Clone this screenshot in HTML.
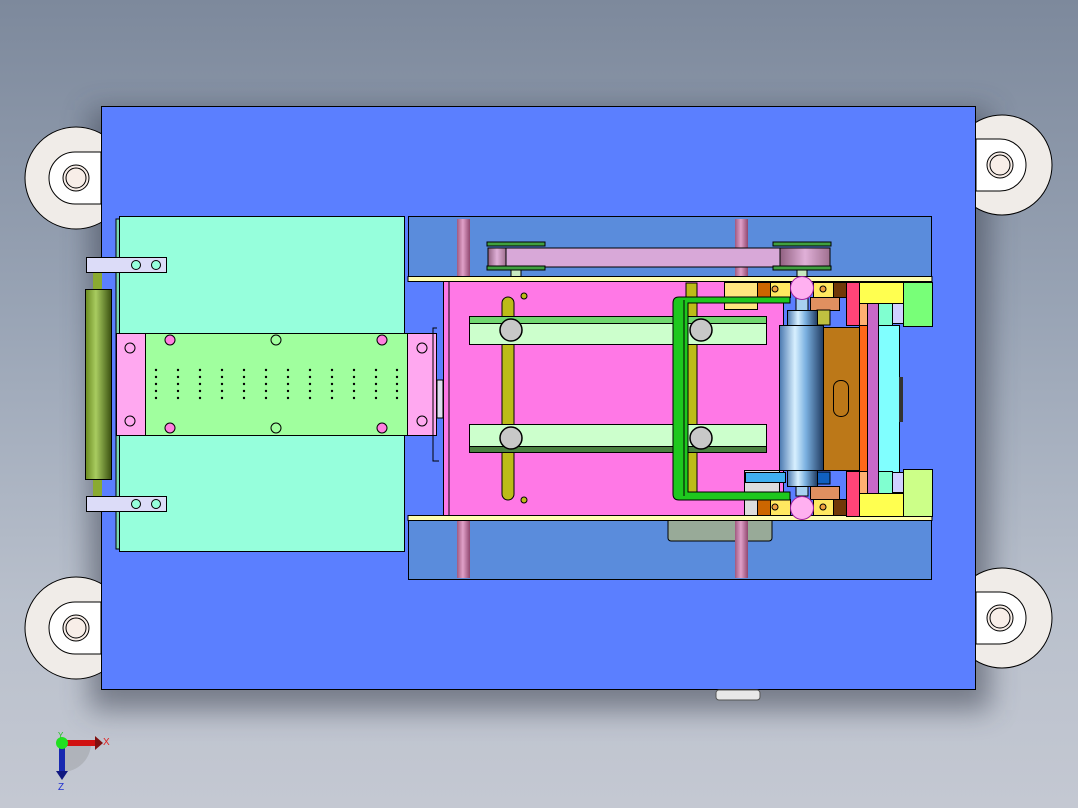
<!DOCTYPE html><html><head><meta charset="utf-8"><style>
html,body{margin:0;padding:0}
body{width:1078px;height:808px;overflow:hidden;background:linear-gradient(180deg,#7d899c 0%,#9aa5b6 40%,#b9c0cc 75%,#c4c8d2 100%);position:relative;font-family:"Liberation Sans",sans-serif}
svg{position:absolute;left:0;top:0}
</style></head><body>
<svg width="1078" height="808" viewBox="0 0 1078 808">
<defs>
<filter id="sh" x="-10%" y="-10%" width="120%" height="130%"><feGaussianBlur stdDeviation="14"/></filter>
<linearGradient id="cyl" x1="0" x2="1"><stop offset="0" stop-color="#4a78b0"/><stop offset=".35" stop-color="#d8f0ff"/><stop offset=".6" stop-color="#7ab0e0"/><stop offset="1" stop-color="#203a60"/></linearGradient>
<linearGradient id="rol" x1="0" x2="1"><stop offset="0" stop-color="#6a8a20"/><stop offset=".4" stop-color="#a8cc60"/><stop offset="1" stop-color="#3a5010"/></linearGradient>
<linearGradient id="rod" x1="0" x2="1"><stop offset="0" stop-color="#a05a80"/><stop offset=".45" stop-color="#e0a0c8"/><stop offset="1" stop-color="#904870"/></linearGradient>
<linearGradient id="pul" x1="0" x2="1"><stop offset="0" stop-color="#906080"/><stop offset=".5" stop-color="#e0b0d8"/><stop offset="1" stop-color="#a07090"/></linearGradient>
</defs>
<rect x="90" y="110" width="900" height="600" fill="#3a4050" opacity=".55" filter="url(#sh)"/>
<g stroke="#000" stroke-width="1">
<circle cx="76" cy="178" r="51" fill="#f0ece8"/>
<circle cx="76" cy="628" r="51" fill="#f0ece8"/>
<circle cx="1002" cy="165" r="50" fill="#f0ece8"/>
<circle cx="1002" cy="618" r="50" fill="#f0ece8"/>
<path d="M101 152 H75 A26 26 0 0 0 75 204 H101 Z" fill="#fff"/>
<path d="M101 602 H75 A26 26 0 0 0 75 654 H101 Z" fill="#fff"/>
<path d="M976 139 H1000 A26 26 0 0 1 1000 191 H976 Z" fill="#fff"/>
<path d="M976 592 H1000 A26 26 0 0 1 1000 644 H976 Z" fill="#fff"/>
<circle cx="76" cy="178" r="13" fill="#f8eee8"/><circle cx="76" cy="178" r="10" fill="#f8eee8"/>
<circle cx="76" cy="628" r="13" fill="#f8eee8"/><circle cx="76" cy="628" r="10" fill="#f8eee8"/>
<circle cx="1000" cy="165" r="13" fill="#f8eee8"/><circle cx="1000" cy="165" r="10" fill="#f8eee8"/>
<circle cx="1000" cy="618" r="13" fill="#f8eee8"/><circle cx="1000" cy="618" r="10" fill="#f8eee8"/>
</g>
<rect x="101.5" y="106.5" width="874" height="583" fill="#5b7fff" stroke="#000"/>
<rect x="716" y="690" width="44" height="10" rx="3" fill="#e8e8e8" stroke="#555"/>
<g stroke="#000" stroke-width="1">
<rect x="116" y="219" width="4" height="330" fill="#7ad8b0"/>
<rect x="119.5" y="216.5" width="285" height="335" fill="#96ffdc"/>
<rect x="145.5" y="333.5" width="262" height="102" fill="#a0ff9e"/>
<rect x="116.5" y="333.5" width="29" height="102" fill="#ffa8f0"/>
<rect x="407.5" y="333.5" width="29" height="102" fill="#ffa8f0"/>
<rect x="437" y="380" width="6" height="38" fill="#dde"/>
<path d="M437 328 h-4 v133 h6" fill="none"/>
<rect x="93" y="272" width="9" height="225" fill="#8aaa30" stroke="none"/>
<rect x="85.5" y="289.5" width="26" height="190" fill="url(#rol)"/>
<rect x="86.5" y="257.5" width="80" height="15" fill="#dcdcf8"/>
<rect x="86.5" y="496.5" width="80" height="15" fill="#dcdcf8"/>
<circle cx="136" cy="265" r="4.5" fill="#96ffdc"/><circle cx="156" cy="265" r="4.5" fill="#96ffdc"/>
<circle cx="136" cy="504" r="4.5" fill="#96ffdc"/><circle cx="156" cy="504" r="4.5" fill="#96ffdc"/>
<circle cx="130" cy="348" r="5" fill="#ffa8f0"/><circle cx="130" cy="421" r="5" fill="#ffa8f0"/>
<circle cx="422" cy="348" r="5" fill="#ffa8f0"/><circle cx="422" cy="421" r="5" fill="#ffa8f0"/>
<circle cx="170" cy="340" r="5" fill="#ff80e0"/><circle cx="276" cy="340" r="5" fill="#a0ff9e"/><circle cx="382" cy="340" r="5" fill="#ff80e0"/>
<circle cx="170" cy="428" r="5" fill="#ff80e0"/><circle cx="276" cy="428" r="5" fill="#a0ff9e"/><circle cx="382" cy="428" r="5" fill="#ff80e0"/>
</g>
<g fill="#000">
<g id="col"><circle cx="156" cy="370" r="1.2"/><circle cx="156" cy="377" r="1.2"/><circle cx="156" cy="384" r="1.2"/><circle cx="156" cy="391" r="1.2"/><circle cx="156" cy="398" r="1.2"/></g>
<use href="#col" x="22"/><use href="#col" x="44"/><use href="#col" x="66"/><use href="#col" x="88"/><use href="#col" x="110"/><use href="#col" x="132"/><use href="#col" x="154"/><use href="#col" x="176"/><use href="#col" x="198"/><use href="#col" x="220"/><use href="#col" x="241"/>
</g>
<g stroke="#000" stroke-width="1">
<rect x="408.5" y="216.5" width="523" height="60" fill="#5a8cdc"/>
<rect x="408.5" y="519.5" width="523" height="60" fill="#5a8cdc"/>
<rect x="668" y="517" width="104" height="24" rx="3" fill="#98aa98"/>
<rect x="457" y="219" width="13" height="57" fill="url(#rod)" stroke="none"/>
<rect x="735" y="219" width="13" height="57" fill="url(#rod)" stroke="none"/>
<rect x="457" y="521" width="13" height="57" fill="url(#rod)" stroke="none"/>
<rect x="735" y="521" width="13" height="57" fill="url(#rod)" stroke="none"/>
<rect x="511" y="267" width="10" height="10" fill="#c8e8c0"/><rect x="797" y="267" width="10" height="10" fill="#c8e8c0"/>
<rect x="488" y="248" width="342" height="19" fill="#d8a8d8"/>
<rect x="488" y="248" width="18" height="19" fill="url(#pul)"/><rect x="780" y="248" width="50" height="19" fill="url(#pul)"/>
<rect x="487" y="242" width="58" height="4" fill="#40a040"/><rect x="487" y="266" width="58" height="4" fill="#40a040"/>
<rect x="773" y="242" width="58" height="4" fill="#40a040"/><rect x="773" y="266" width="58" height="4" fill="#40a040"/>
<rect x="408" y="276.5" width="524" height="5" fill="#ffffb0"/>
<rect x="408" y="515.5" width="524" height="5" fill="#ffffb0"/>
<rect x="443.5" y="281.5" width="340" height="234" fill="#ff78e6"/>
<line x1="449" y1="282" x2="449" y2="515"/>
<rect x="502" y="297" width="12" height="203" rx="6" fill="#bcbc18"/>
<rect x="686" y="283" width="11" height="217" fill="#bcbc18"/>
<circle cx="524" cy="296" r="3" fill="#bcbc18"/><circle cx="524" cy="500" r="3" fill="#bcbc18"/>
<rect x="469.5" y="316.5" width="297" height="28" fill="#ccffcc"/><rect x="469.5" y="316.5" width="297" height="7" fill="#70d870"/>
<rect x="469.5" y="424.5" width="297" height="28" fill="#ccffcc"/><rect x="469.5" y="446.5" width="297" height="6" fill="#4a8040"/>
<circle cx="511" cy="330" r="11" fill="#c8c8c8" stroke-width="1.5"/><circle cx="701" cy="330" r="11" fill="#c8c8c8" stroke-width="1.5"/>
<circle cx="511" cy="438" r="11" fill="#c8c8c8" stroke-width="1.5"/><circle cx="701" cy="438" r="11" fill="#c8c8c8" stroke-width="1.5"/>
<rect x="724.5" y="282.5" width="33" height="27" fill="#ffe680"/>
<rect x="757.5" y="282.5" width="13" height="15" fill="#cc6600"/>
<rect x="770.5" y="282.5" width="20" height="15" fill="#ffe860"/>
<rect x="813.5" y="282.5" width="20" height="15" fill="#ffe860"/>
<rect x="833.5" y="282.5" width="13" height="15" fill="#703808"/>
<rect x="810.5" y="297.5" width="29" height="13" fill="#e09060"/>
<rect x="744.5" y="470.5" width="35" height="45" fill="#ddd"/>
<rect x="745.5" y="472.5" width="40" height="10" fill="#40b0f0"/>
<rect x="757.5" y="499.5" width="13" height="16" fill="#cc6600"/>
<rect x="770.5" y="499.5" width="20" height="16" fill="#ffe860"/>
<rect x="813.5" y="499.5" width="20" height="16" fill="#ffe860"/>
<rect x="833.5" y="499.5" width="13" height="16" fill="#703808"/>
<rect x="810.5" y="486.5" width="29" height="13" fill="#e09060"/>
<rect x="817" y="472" width="13" height="12" fill="#1060c0"/>
<rect x="817" y="310" width="13" height="15" fill="#c0c040"/>
<rect x="846.5" y="282.5" width="13" height="43" fill="#ff4478"/>
<rect x="846.5" y="471.5" width="13" height="45" fill="#ff4478"/>
<rect x="859.5" y="282.5" width="44" height="21" fill="#ffff50"/>
<rect x="859.5" y="493.5" width="44" height="23" fill="#ffff50"/>
<rect x="859.5" y="303.5" width="8" height="22" fill="#ffb070"/>
<rect x="859.5" y="471.5" width="8" height="22" fill="#ffb070"/>
<rect x="859.5" y="325.5" width="8" height="146" fill="#ff6818"/>
<rect x="867.5" y="303.5" width="11" height="190" fill="#c868c8"/>
<rect x="878.5" y="325.5" width="21" height="147" fill="#80ffff"/>
<rect x="878.5" y="303.5" width="14" height="22" fill="#80ffd0"/><rect x="892.5" y="303.5" width="11" height="20" fill="#d0d0ff"/>
<rect x="878.5" y="471.5" width="14" height="22" fill="#80ffd0"/><rect x="892.5" y="472.5" width="11" height="20" fill="#d0d0ff"/>
<rect x="903.5" y="282.5" width="29" height="44" fill="#78ff78"/>
<rect x="903.5" y="469.5" width="29" height="47" fill="#ccff88"/>
<rect x="899" y="377" width="4" height="45" fill="#333" stroke="none"/>
<rect x="823.5" y="327.5" width="36" height="143" fill="#bc7818"/>
<rect x="833.5" y="380.5" width="15" height="36" rx="7" fill="none"/>
<rect x="796" y="296" width="12" height="200" fill="#a8d0f0"/>
<rect x="787.5" y="310.5" width="30" height="15" fill="url(#cyl)"/>
<rect x="787.5" y="470.5" width="30" height="16" fill="url(#cyl)"/>
<rect x="779.5" y="325.5" width="44" height="145" fill="url(#cyl)"/>
<path d="M673 303 Q673 297 679 297 H790 V303 H688 V492 H790 V500 H679 Q673 500 673 494 Z" fill="#1ec81e"/>
<path d="M688 303 H790 M688 492 H790 M684 300 V496" fill="none"/>
<circle cx="802" cy="288" r="11.5" fill="#ffb0f0" stroke="#a020a0"/>
<circle cx="802" cy="508" r="11.5" fill="#ffb0f0" stroke="#a020a0"/>
<circle cx="775" cy="289" r="3" fill="#f0a040"/><circle cx="823" cy="289" r="3" fill="#f0a040"/>
<circle cx="775" cy="507" r="3" fill="#f0a040"/><circle cx="823" cy="507" r="3" fill="#f0a040"/>
</g>
<path d="M62 743 H91 A29 29 0 0 1 62 772 Z" fill="#888" opacity=".3"/>
<rect x="62" y="740" width="34" height="6" fill="#d01010"/>
<path d="M95 736 L103 743 L95 750 Z" fill="#801010"/>
<rect x="59" y="745" width="6" height="28" fill="#1828b0"/>
<path d="M56 771 L62 780 L68 771 Z" fill="#101880"/>
<circle cx="62" cy="743" r="6" fill="#20e020"/>
<text x="103" y="745" font-size="10" fill="#e02020">X</text>
<text x="58" y="790" font-size="10" fill="#2030d0">Z</text>
<text x="58" y="738" font-size="8" fill="#20c020">Y</text>
</svg>
</body></html>
